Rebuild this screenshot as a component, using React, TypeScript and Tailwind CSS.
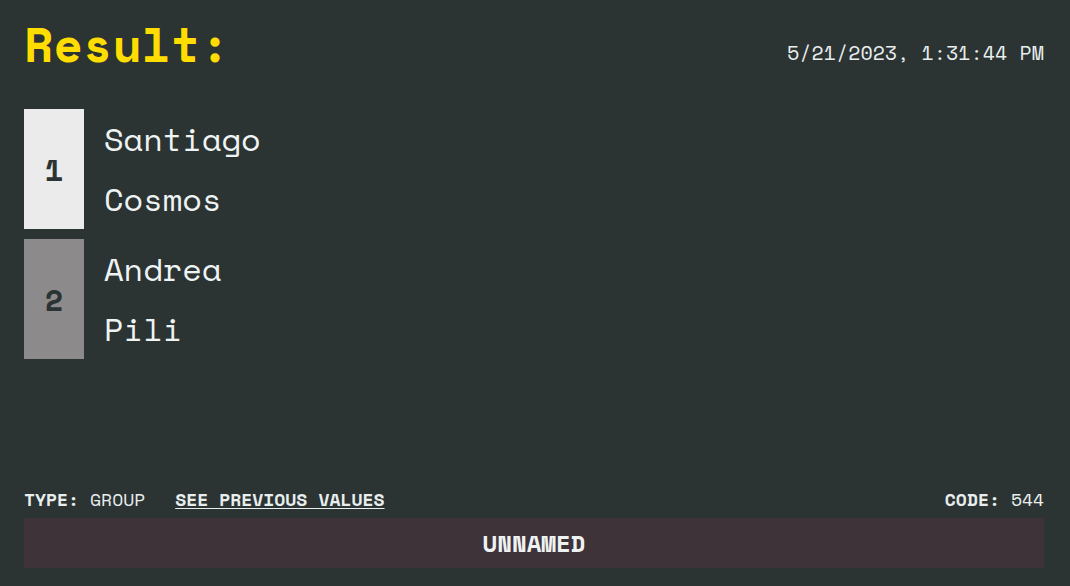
const mono = "font-['Space_Mono','Liberation_Mono','DejaVu_Sans_Mono',monospace]";

interface Group {
  rank: number;
  members: string[];
  tone: string;
}

const groups: Group[] = [
  { rank: 1, members: ["Santiago", "Cosmos"], tone: "bg-[#ebebeb]" },
  { rank: 2, members: ["Andrea", "Pili"], tone: "bg-[#8c8a8a]" },
];

const GroupRow = ({ group }: { group: Group }) => {
  return (
    <div className="flex">
      <div
        className={`w-[60px] flex items-center justify-center text-[30px] font-bold text-[#2c3333] ${group.tone}`}
      >
        {group.rank}
      </div>
      <div className="pl-[20px]">
        {group.members.map((m) => (
          <div key={m} className="h-[60px] leading-[60px] text-[32px] text-[#eef4f4]">
            {m}
          </div>
        ))}
      </div>
    </div>
  );
};

export default function App() {
  return (
    <div className={`h-[586px] bg-[#2c3333] flex flex-col pl-6 pr-[26px] ${mono}`}>
      <div className="flex items-start justify-between pt-[16px]">
        <h1 className="text-[48px] leading-[56px] font-bold text-[#ffdd00]">Result:</h1>
        <div className="mt-[25px] text-[20px] leading-[24px] text-[#e8eeee]">
          5/21/2023, 1:31:44 PM
        </div>
      </div>

      <div className="mt-[37px] flex flex-col gap-[10px]">
        {groups.map((g) => (
          <GroupRow key={g.rank} group={g} />
        ))}
      </div>

      <div className="mt-auto flex items-center justify-between text-[18px] leading-[22px] text-[#e8eeee]">
        <div className="flex items-center">
          <span className="font-bold">TYPE:</span>
          <span className="ml-[11px]">GROUP</span>
          <a className="ml-[30px] font-bold underline underline-offset-2 cursor-pointer">
            SEE PREVIOUS VALUES
          </a>
        </div>
        <div>
          <span className="font-bold">CODE:</span>
          <span className="ml-[11px]">544</span>
        </div>
      </div>

      <div className="mt-[8px] mb-[18px] h-[50px] bg-[#3e3339] flex items-center justify-center text-[24px] font-bold text-[#eef2f2]">
        UNNAMED
      </div>
    </div>
  );
}
